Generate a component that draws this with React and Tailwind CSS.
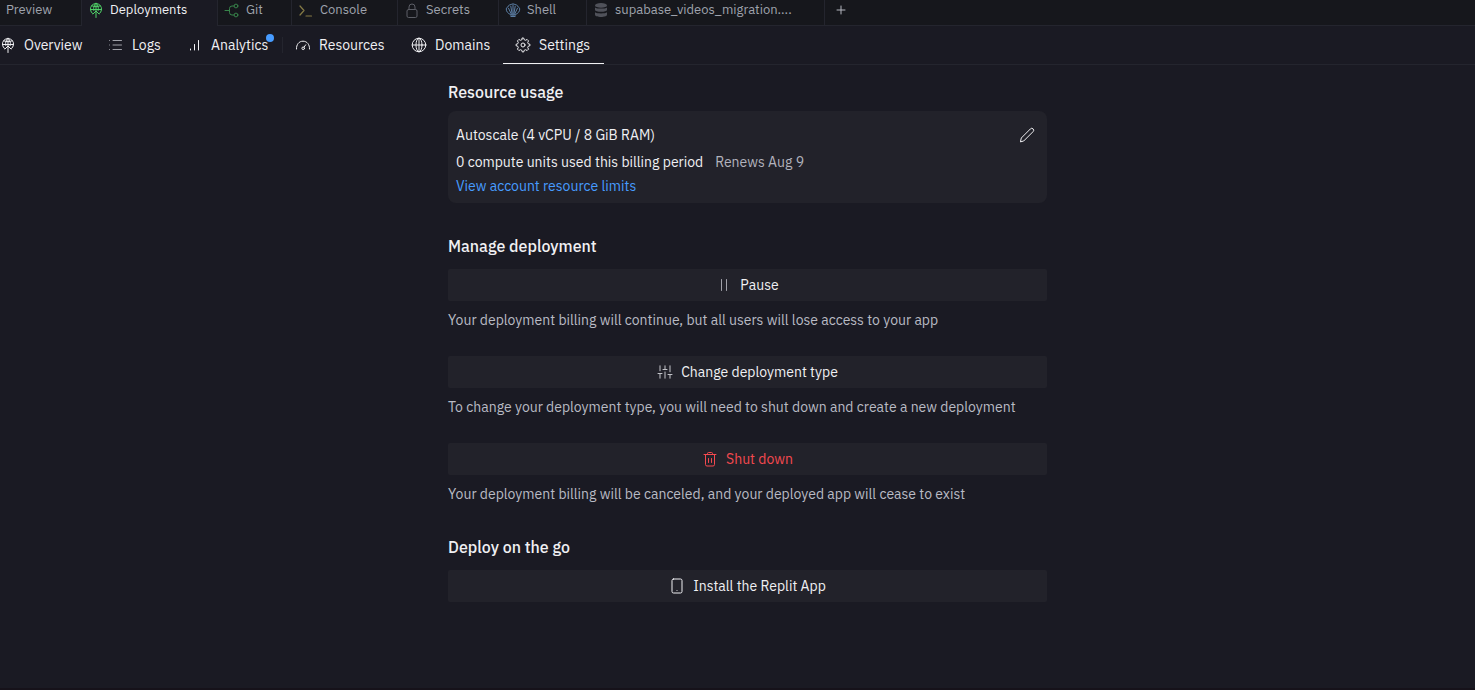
import React from "react";

function Icon({ size = 16, view = "0 0 16 16", stroke = 1, className = "", children }) {
  return (
    <svg
      width={size}
      height={size}
      viewBox={view}
      fill="none"
      stroke="currentColor"
      strokeWidth={stroke}
      strokeLinecap="round"
      strokeLinejoin="round"
      aria-hidden="true"
      className={"shrink-0 " + className}
    >
      {children}
    </svg>
  );
}

function DeployIcon({ className }) {
  return (
    <Icon className={className}>
      <path d="M4.600 11.600A5.600 5.600 0 1 1 11.400 11.600" />
      <path d="M2.500 7.500h11M3.800 3.800c2.400 1.200 6 1.200 8.400 0" />
      <path d="M5.800 8.500C5.200 5.500 6 2.700 8 1.200c2 1.500 2.800 4.300 2.200 7.300" />
      <path d="M8 1.200v14.300M5 12l3-3 3 3" />
    </Icon>
  );
}

function GitIcon({ className }) {
  return (
    <Icon className={className}>
      <path d="M1 8.500h4.500M10 4H8a2.500 2.500 0 0 0-2.500 2.500v4A2.500 2.500 0 0 0 8 13h2" />
      <circle cx="12" cy="4" r="1.900" />
      <circle cx="12" cy="13" r="1.900" />
    </Icon>
  );
}

function PromptIcon({ className }) {
  return (
    <Icon className={className} stroke={1.2}>
      <path d="M2 4 6 8.500 2 13M8 14h5.500" />
    </Icon>
  );
}

function LockIcon({ className }) {
  return (
    <Icon className={className}>
      <rect x="3" y="7.500" width="10" height="8" rx="1.500" />
      <path d="M5 7.500V5a3 3 0 0 1 6 0v2.500" />
    </Icon>
  );
}

function ShellIcon({ className }) {
  return (
    <Icon className={className}>
      <path d="M6 14.500h4M6.200 14.300 5.800 12.700C3 11.500 1.200 9.500 1.300 7c.1-1.400 1-2 1.900-2.300C3.600 3.200 4.700 2.400 6 2.600 6.900 1.700 9.100 1.700 10 2.600c1.300-.2 2.400.6 2.800 2.100.9.300 1.800.9 1.900 2.300.1 2.500-1.700 4.500-4.500 5.700l-.4 1.600" />
      <path d="M8 3v11M5.800 4.200 7.300 13M10.200 4.200 8.700 13M3.500 6.200 6.500 12.500M12.500 6.200l-3 6.300" />
    </Icon>
  );
}

function DatabaseIcon({ className }) {
  return (
    <Icon className={className}>
      <g fill="currentColor" stroke="none">
        <ellipse cx="8" cy="3.400" rx="6" ry="2.400" />
        <path d="M2 5.400c1.500 1.600 10.500 1.600 12 0v2.400c0 2.700-12 2.700-12 0z" />
        <path d="M2 10.200c1.500 1.600 10.500 1.600 12 0v2.500c0 2.900-12 2.900-12 0z" />
      </g>
    </Icon>
  );
}

function ListIcon() {
  return (
    <Icon className="text-[#a0a1a9]">
      <path d="M5 3.500h8.500M5 8h8.500M5 12.500h8.500M1.500 3.500h.01M1.500 8h.01M1.500 12.500h.01" />
    </Icon>
  );
}

function BarsIcon() {
  return (
    <Icon>
      <path d="M3.500 13v-1M7.500 13V7.500M11.500 13V3.500" />
    </Icon>
  );
}

function GaugeIcon() {
  return (
    <Icon>
      <path d="M1.500 12C1.200 7.500 4 4.200 8 4.200s6.800 3.300 6.500 7.800M9 10.200l1.700-2.400" />
      <circle cx="8.200" cy="11.300" r="1.300" />
    </Icon>
  );
}

function GlobeIcon() {
  return (
    <Icon>
      <circle cx="8" cy="8" r="6.800" />
      <ellipse cx="8" cy="8" rx="3" ry="6.800" />
      <path d="M1.200 8h13.600M8 1.200v13.600" />
    </Icon>
  );
}

function GearIcon() {
  return (
    <Icon view="0 0 24 24" stroke={1.5}>
      <path d="M11 1.500h2l.8 2.600 2 .8 2.400-1.200 2.100 2.100-1.200 2.400.8 2 2.600.8v2l-2.600.8-.8 2 1.200 2.400-2.100 2.100-2.400-1.200-2 .8-.8 2.600h-2l-.8-2.600-2-.8-2.400 1.200-2.100-2.100 1.200-2.400-.8-2L1.500 13v-2l2.600-.8.8-2-1.200-2.400 2.100-2.100 2.400 1.200 2-.8z" />
      <circle cx="12" cy="12" r="3" />
    </Icon>
  );
}

function PencilIcon() {
  return (
    <Icon>
      <path d="M1.500 14.500 2.300 11 11.400 1.900a1.850 1.850 0 0 1 2.700 2.700L5 13.700z" />
    </Icon>
  );
}

function PauseIcon() {
  return (
    <Icon className="text-[#a0a1a9]">
      <path d="M5.500 2.500v11M10.500 2.500v11" />
    </Icon>
  );
}

function SlidersIcon() {
  return (
    <Icon className="text-[#c2c3c8]">
      <path d="M3 1.800v5M3 9.500v4.700M8 1.800v3M8 8v6.200M13 1.800v6M13 11v3.200M1 9.500h4M6 5.500h4M11 10.500h4" />
    </Icon>
  );
}

function TrashIcon() {
  return (
    <Icon>
      <path d="M2 3.500h12M5.500 3.500v-1a1 1 0 0 1 1-1h3a1 1 0 0 1 1 1v1M3.500 3.500v10a1.500 1.500 0 0 0 1.500 1.500h6a1.500 1.500 0 0 0 1.500-1.500v-10M6.500 7.500v4M9.500 7.500v4" />
    </Icon>
  );
}

function PhoneIcon() {
  return (
    <Icon>
      <rect x="3" y="1" width="10" height="14" rx="1.500" />
      <path d="M8 12.500h.01" />
    </Icon>
  );
}

function Tab({ label, icon, width, active }) {
  return (
    <button
      type="button"
      role="tab"
      aria-selected={!!active}
      className={
        "flex shrink-0 items-center gap-1.5 whitespace-nowrap border-r border-[#24252e] pb-1.5 pl-1.5 " +
        width +
        (active ? " bg-[#1a1a23] text-[#f0f0f3]" : " border-b text-[#9fa3ad]")
      }
    >
      {icon}
      {label}
    </button>
  );
}

function NavItem({ label, icon, width, active, dot }) {
  return (
    <a
      href="#"
      aria-current={active ? "page" : undefined}
      className={
        "flex shrink-0 items-center gap-2 border-b px-3 text-[#f0f0f3] " +
        width +
        (active ? " border-[#f0f0f3]" : " border-transparent")
      }
    >
      {icon}
      <span className="relative">
        {label}
        {dot && <span className="absolute -right-1.5 -top-px size-2 rounded-full bg-[#479cff]" />}
      </span>
    </a>
  );
}

function Action({ icon, label, danger }) {
  return (
    <button
      type="button"
      className={
        "flex h-8 w-full items-center justify-center gap-2 rounded-xs bg-[#22222a] " +
        (danger ? "text-[#f4494f]" : "text-[#f0f0f3]")
      }
    >
      {icon}
      {label}
    </button>
  );
}

function Heading({ children }) {
  return <h2 className="text-base font-medium leading-6">{children}</h2>;
}

export default function App() {
  return (
    <div className="flex min-h-screen flex-col overflow-x-hidden border-b-2 border-[#16121a] bg-[#1a1a23] font-['IBM_Plex_Sans',Roboto,sans-serif] text-sm leading-5 text-[#f0f0f3]">
      <div role="tablist" className="flex h-[26px] bg-[#16171c] text-[13px]">
        <Tab label="Preview" width="w-[82px]" />
        <Tab
          label="Deployments"
          width="w-[136px]"
          active
          icon={<DeployIcon className="text-[#4fd167]" />}
        />
        <Tab label="Git" width="w-[74px]" icon={<GitIcon className="text-[#37844a]" />} />
        <Tab label="Console" width="w-[106px]" icon={<PromptIcon className="text-[#857a45]" />} />
        <Tab label="Secrets" width="w-[101px]" icon={<LockIcon className="text-[#5c5e66]" />} />
        <Tab label="Shell" width="w-[88px]" icon={<ShellIcon className="text-[#5c7fa5]" />} />
        <Tab
          label="supabase_videos_migration...."
          width="w-[238px]"
          icon={<DatabaseIcon className="text-[#50525a]" />}
        />
        <button
          type="button"
          aria-label="New tab"
          className="flex flex-1 items-center border-b border-[#24252e] pb-1.5 pl-2 text-[#b5b8c0]"
        >
          <Icon>
            <path d="M8 4v8M4 8h8" />
          </Icon>
        </button>
      </div>

      <nav className="flex h-[39px] border-b border-[#24252e]">
        <div className="-ml-3 flex">
          <NavItem label="Overview" width="w-[108px]" icon={<DeployIcon />} />
          <NavItem label="Logs" width="w-[79px]" icon={<ListIcon />} />
          <NavItem label="Analytics" width="w-[107px]" icon={<BarsIcon />} dot />
          <span className="h-4 w-px self-center bg-[#24252e]" />
          <NavItem label="Resources" width="w-[116px]" icon={<GaugeIcon />} />
          <NavItem label="Domains" width="w-[104px]" icon={<GlobeIcon />} />
          <NavItem label="Settings" width="w-[101px]" icon={<GearIcon />} active />
        </div>
      </nav>

      <main className="flex flex-1 flex-col items-center pl-5 pt-[15px]">
        <div className="flex w-full max-w-[599px] flex-col gap-[31px]">
          <section className="flex flex-col gap-[7px]">
            <Heading>Resource usage</Heading>
            <div className="flex items-start justify-between rounded-lg bg-[#22222a] px-2 pb-[7px] pt-3.5">
              <div className="flex flex-col gap-1">
                <p className="pb-[3px]">Autoscale (4 vCPU / 8 GiB RAM)</p>
                <p className="flex gap-3">
                  0 compute units used this billing period
                  <span className="text-[#b2b3bd]">Renews Aug 9</span>
                </p>
                <a href="#" className="text-[#479cff]">
                  View account resource limits
                </a>
              </div>
              <button type="button" aria-label="Edit resources" className="mr-1 mt-0.5">
                <PencilIcon />
              </button>
            </div>
          </section>

          <section className="flex flex-col gap-[11px]">
            <Heading>Manage deployment</Heading>
            <div className="flex flex-col gap-[26px] text-[#b9bbc4]">
              <div className="flex flex-col gap-[9px]">
                <Action icon={<PauseIcon />} label="Pause" />
                <p>Your deployment billing will continue, but all users will lose access to your app</p>
              </div>
              <div className="flex flex-col gap-[9px]">
                <Action icon={<SlidersIcon />} label="Change deployment type" />
                <p>To change your deployment type, you will need to shut down and create a new deployment</p>
              </div>
              <div className="flex flex-col gap-[9px]">
                <Action icon={<TrashIcon />} label="Shut down" danger />
                <p>Your deployment billing will be canceled, and your deployed app will cease to exist</p>
              </div>
            </div>
          </section>

          <section className="flex flex-col gap-[11px]">
            <Heading>Deploy on the go</Heading>
            <Action icon={<PhoneIcon />} label="Install the Replit App" />
          </section>
        </div>
      </main>
    </div>
  );
}
